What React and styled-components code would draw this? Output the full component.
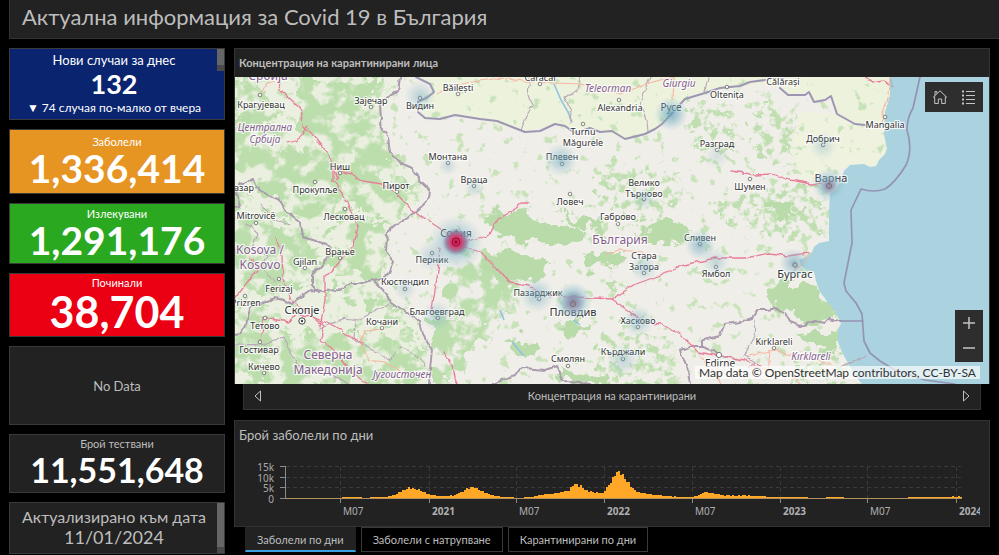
import { useState } from "react";
import styled, { createGlobalStyle } from "styled-components";

const GlobalStyle = createGlobalStyle`
  * {
    box-sizing: border-box;
  }
  body {
    margin: 0;
    background: #000;
    color: #bdbdbd;
    font-family: Lato, "Noto Sans", sans-serif;
  }
  button {
    font: inherit;
    color: inherit;
    margin: 0;
    padding: 0;
    border: 0;
    background: none;
    cursor: pointer;
  }
`;

const Page = styled.div`
  min-height: 100vh;
  display: flex;
  flex-direction: column;
`;

const Header = styled.header`
  margin-left: 9px;
  height: 39px;
  padding: 0 12px;
  background: #222;
  border: solid #333;
  border-width: 0 0 1px 1px;
`;

const Title = styled.h1`
  margin: 0;
  font-size: 22px;
  line-height: 34px;
  font-weight: 400;
`;

const Content = styled.main`
  flex: 1;
  display: grid;
  grid-template-columns: 216px minmax(0, 1fr);
  gap: 9px;
  padding: 9px 9px 1px 9px;
`;

const Sidebar = styled.aside`
  display: grid;
  grid-template-rows: 72fr 65fr 61fr 64fr 79fr 59fr 52fr;
  gap: 9px;
`;

const Card = styled.section`
  display: flex;
  flex-direction: column;
  align-items: center;
  justify-content: center;
  position: relative;
  overflow: hidden;
  min-height: 0;
  padding-right: ${({ $scrolls }) => ($scrolls ? 6 : 0)}px;
  padding-bottom: ${({ $raise }) => $raise || 0}px;
  background: ${({ $bg }) => $bg || "#222"};
  border: 1px solid #3a3a3a;
  color: ${({ $bg }) => ($bg ? "#fff" : "#bdbdbd")};
`;

const CardLabel = styled.div`
  font-size: ${({ $size }) => $size || 12}px;
  line-height: ${({ $line }) => $line || 16}px;
  white-space: nowrap;
`;

const CardValue = styled.div`
  color: #fff;
  font-weight: 700;
  font-size: ${({ $size }) => $size}px;
  line-height: ${({ $line }) => $line || 36}px;
`;

const ScrollThumb = styled.span`
  position: absolute;
  top: 0;
  right: 0;
  width: 7px;
  height: ${({ $height }) => $height}px;
  background: #666;
  border-bottom: 6px solid #4a4a4a;
`;

const Main = styled.div`
  display: flex;
  flex-direction: column;
  min-width: 0;
`;

const MapPanel = styled.section`
  flex: 1;
  display: flex;
  flex-direction: column;
  min-height: 0;
  background: #222;
  border: 1px solid #333;
  border-bottom: 0;
`;

const MapTitle = styled.h2`
  margin: 0;
  padding: 0 4px;
  font-size: 11px;
  line-height: 28px;
  font-weight: 700;
`;

const MapArea = styled.div`
  position: relative;
  flex: 1;
  min-height: 0;
  overflow: hidden;
  background: #aad3df;
`;

const MapSvg = styled.svg`
  position: absolute;
  width: 100%;
  height: 100%;
  display: block;
  font-family: "Noto Sans", sans-serif;
`;

const MapTools = styled.div`
  position: absolute;
  top: 5px;
  right: 6px;
  display: flex;
  background: #2e2e2e;
`;

const ZoomTools = styled.div`
  position: absolute;
  right: 6px;
  bottom: 22px;
  display: flex;
  flex-direction: column;
  background: #2e2e2e;
`;

const ToolButton = styled.button`
  && {
    display: flex;
    align-items: center;
    justify-content: center;
    width: ${({ $width }) => $width}px;
    height: ${({ $height }) => $height}px;
  }
`;

const Attribution = styled.div`
  position: absolute;
  right: 9px;
  bottom: 5px;
  padding: 0 4px;
  background: rgba(255, 255, 255, 0.66);
  color: #333;
  font-size: 12px;
  line-height: 13px;
`;

const Carousel = styled.nav`
  display: flex;
  align-items: center;
  justify-content: space-between;
  margin: 0 9px;
  height: 26px;
  padding: 0 9px 2px;
  background: #222;
  border: 1px solid #333;
  border-top: 0;
  font-size: 11px;
`;

const ChartPanel = styled.section`
  margin-top: 10px;
  background: #222;
  border: 1px solid #333;
`;

const ChartTitle = styled.h2`
  margin: 0;
  padding: 4px 4px 0;
  font-size: 13px;
  line-height: 20px;
  font-weight: 400;
`;

const ChartSvg = styled.svg`
  display: block;
  width: 100%;
  font-family: "Noto Sans", sans-serif;
`;

const Tabs = styled.div`
  display: flex;
  gap: 5px;
  padding-left: 11px;
  margin-bottom: 2px;
`;

const Tab = styled.button`
  && {
    height: 25px;
    padding: 0 11px;
    font-size: 11px;
    background: ${({ $active }) => ($active ? "#222" : "#000")};
    border: 1px solid ${({ $active }) => ($active ? "#222" : "#3a3a3a")};
    border-bottom: ${({ $active }) =>
      $active ? "2px solid #3aa0e0" : "1px solid #3a3a3a"};
  }
`;

const forests = [
  "M300 77L392 77L380 100L381 122L390 150L400 166L424 186L408 215L380 214L340 200L320 180L300 140Z",
  "M234 77L262 77L275 100L290 140L268 165L250 175L234 170Z",
  "M280 150L330 158L350 190L330 222L290 215L262 190L262 168Z",
  "M234 195L300 225L325 245L318 284L296 294L275 296L250 290L234 300Z",
  "M330 215L400 222L386 240L392 262L380 276L336 286L326 262L345 240Z",
  "M234 310L262 308L300 335L300 384L234 384Z",
  "M300 340L350 332L420 332L430 350L424 384L300 384Z",
  "M380 290L395 306L418 322L390 314L350 302L340 296Z",
  "M465 246L500 252L520 270L518 306L490 322L460 320L446 300L450 270Z",
  "M440 318L500 322L482 345L462 372L450 384L436 384L434 345Z",
];

const thinForests = [
  "M604 164L650 165L684 172L684 210L660 220L620 212L602 194Z",
  "M606 330L630 326L676 340L680 356L684 384L606 384L598 366Z",
  "M690 100L735 108L742 150L700 152Z",
  "M758 105L802 118L794 165L765 165L755 140Z",
  "M712 205L766 186L828 190L829 240L800 238L740 226Z",
  "M800 358L850 362L856 384L790 384Z",
  "M612 274L626 276L632 290L614 290Z",
];

const solidForests = [
  "M488 218L500 206L514 212L545 219L580 230L579 242L560 246L520 240L496 236Z",
  "M480 258L500 252L534 254L552 262L548 272L520 280L500 282L486 272Z",
  "M584 256L610 252L626 260L606 268L582 266Z",
  "M632 228L668 222L690 226L684 240L650 244L640 238Z",
  "M556 212L600 222L606 232L580 228Z",
  "M768 200L792 206L804 214L784 216L766 210Z",
  "M766 290L780 284L812 284L828 302L832 318L806 322L790 312L766 300Z",
  "M800 334L836 326L838 344L840 358L820 348Z",
  "M560 372L600 374L610 380L600 384L562 384Z",
  "M508 340L522 338L532 346L534 356L522 354Z",
  "M556 320L578 320L592 330L570 334Z",
  "M242 112L250 118L246 134L240 130Z",
];

const borders = [
  "M400 77L398 92L390 95L380 105L381 118L379 125L388 137L390 152L399 162L412 168L420 180L430 190L429 199L420 208L412 215L395 225L387 232L386 253L394 262L388 275L380 279L373 280L358 284L350 284L340 290L323 291L310 290L300 297L292 305L284 300L275 298L262 303L250 308L246 325L240 334L234 335",
  "M373 280L383 290L392 303L408 313L420 322L423 335L432 350L430 368L429 384",
  "M234 207L240 206L236 194L240 184L253 179L256 188L268 195L280 200L285 210L300 222L302 237L327 244L331 248L325 262L312 275L312 285L318 292",
  "M493 384L515 375L520 368L535 369L545 370L557 366L562 378L570 382L590 384",
  "M690 384L687 365L682 357L680 350L690 347L702 347L702 340L720 336L725 324L740 322L752 318L757 310L768 310L776 308L785 313L790 322L800 326L815 321L825 323L828 319L840 321",
  "M702 347L716 352L727 358",
];

const rivers = [
  "M416 77L430 84L434 92L428 97L418 102L418 112L425 118L440 119L455 115L480 119L497 121L525 132L540 131L555 124L565 126L575 133L590 128L600 132L612 131L625 139L645 134L655 129L662 124L675 110L685 99L705 93L720 88L740 86L750 82L765 80",
  "M780 88L788 95L805 95L809 92L814 102L825 100L831 96L837 114L855 124L865 125",
];

const seaBorder =
  "M920 77L913 108Q907 118 907 130Q913 150 906 165Q896 182 885 189Q874 193 861 189L851 210L852 243L844 283L846 291L856 303L862 314L864 341L870 353L880 361L895 370L925 380L955 384M840 321H863";

const regionLines = [
  "M530 77L528 95L533 105L527 115L521 130",
  "M580 77L578 90L564 97L572 112L570 124",
  "M650 77L644 92L641 105L647 120L648 132",
  "M708 77L705 92M890 77L893 88L888 84",
  "M318 330L345 318L358 320L390 304M355 320L354 340L372 350L390 360L400 346L415 354L425 366",
  "M234 344L262 345L284 336L290 352L298 366L330 372L348 384",
  "M755 320L754 338L744 356L756 362L748 368M840 367L866 356",
  "M247 224L258 234L252 248L268 256L262 268L275 282",
  "M262 205L274 220L290 224",
];

const motorways = [
  "M277 80L283 93L300 107L303 125L313 135L327 152L333 168L337 180L340 170M307 126L301 137L295 141L288 143",
  "M333 168L333 180L344 197L352 214L358 226L354 246L336 266L325 276L325 300L320 327",
  "M337 170L352 174L363 181L382 184L395 192L410 208L430 222L447 233",
  "M462 243L490 234L497 220L515 209L522 203L530 203",
  "M458 245L480 252L498 270L510 283L530 286L550 296L575 297L612 299L636 284L658 276L680 266L715 258L745 258L770 253L788 256L808 253",
  "M612 299L630 312L642 322L660 324L680 334L698 352L720 356L745 360L760 366",
  "M440 248L438 272L434 296L432 310M444 352L452 366L457 384",
  "M276 238L282 256L283 278L290 300L310 314L324 326L320 340L334 350L350 372L368 384",
  "M310 316L334 326L350 336L362 343M264 318L290 322L296 314L310 316M264 318L261 342",
  "M234 300L252 276L258 270L250 258",
  "M732 171L755 175L772 174L790 180L812 184L822 183",
  "M864 77L872 82L884 80L888 84",
];

const trunks = [
  "M277 80L266 84L261 94M360 344L366 330L382 328M360 344L370 360L384 362L410 376",
  "M436 94L460 84L500 78L530 82L580 84L620 94L652 82L675 77M674 77L673 100",
  "M890 77L888 95L883 110L884 130",
  "M808 253L806 262L794 270M748 356L775 350L800 358L830 364M770 350L768 372M700 356L718 374L722 384M750 366L790 374L800 384",
  "M604 254L620 250L642 252L650 256",
];

const streams = [
  "M554 84L561 100L568 112L572 122",
  "M512 342L524 356M574 320L580 325M500 310L504 320M626 350L640 356",
];

// x, y, text, font size
const cities = [
  [261, 108, "Крагујевац"],
  [371, 104, "Зајечар"],
  [420, 109, "Видин"],
  [458, 91, "Băilești"],
  [540, 81, "Caracal"],
  [620, 111, "Alexandria"],
  [671, 111, "Русе", 10],
  [727, 98, "Oltenița"],
  [783, 85, "Călărași"],
  [885, 128, "Mangalia"],
  [583, 135, "Turnu"],
  [583, 146, "Măgurele"],
  [448, 160, "Монтана"],
  [562, 160, "Плевен"],
  [717, 147, "Разград"],
  [823, 142, "Добрич"],
  [474, 183, "Враца"],
  [340, 170, "Ниш"],
  [315, 193, "Прокупље"],
  [396, 189, "Пирот"],
  [344, 220, "Лесковац"],
  [244, 191, "азар"],
  [256, 219, "Mitrovicë"],
  [570, 205, "Ловеч"],
  [644, 186, "Велико"],
  [644, 197, "Търново"],
  [618, 220, "Габрово"],
  [750, 190, "Шумен"],
  [831, 182, "Варна", 11],
  [456, 237, "София", 10],
  [432, 263, "Перник"],
  [340, 255, "Врање"],
  [305, 265, "Gjilan"],
  [279, 292, "Ferizaj"],
  [246, 306, "Prizren"],
  [405, 285, "Кюстендил"],
  [437, 315, "Благоевград"],
  [302, 314, "Скопје", 11],
  [265, 329, "Тетово"],
  [382, 325, "Кочани"],
  [259, 353, "Гостивар"],
  [264, 370, "Кичево"],
  [538, 296, "Пазарджик"],
  [573, 316, "Пловдив", 11],
  [644, 259, "Стара"],
  [644, 270, "Загора"],
  [700, 241, "Сливен"],
  [716, 277, "Ямбол"],
  [638, 324, "Хасково"],
  [568, 362, "Смолян"],
  [623, 355, "Кърджали"],
  [795, 278, "Бургас", 11],
  [774, 345, "Kırklareli"],
  [720, 367, "Edirne", 10],
];

const regions = [
  [265, 131, "Централна", 10, true],
  [265, 143, "Србија", 10, true],
  [608, 92, "Teleorman", 10, true],
  [679, 87, "Giurgiu", 10, true],
  [811, 360, "Kırklareli", 10, true],
  [402, 378, "Југоисточен", 10, true],
  [268, 80, "Србија", 12, false],
  [260, 254, "Kosova /", 12, false],
  [260, 269, "Kosovo", 12, false],
  [328, 359, "Северна", 12, false],
  [328, 374, "Македонија", 12, false],
  [620, 244, "България", 12, false],
];

const dots = [
  [260, 95], [371, 107], [420, 98], [458, 94], [540, 84], [619, 100],
  [727, 87], [885, 117], [583, 124], [448, 163], [562, 164], [717, 150],
  [823, 145], [474, 186], [340, 173], [315, 182], [397, 192], [345, 209],
  [256, 223], [570, 194], [644, 199], [618, 224], [750, 179], [432, 253],
  [340, 258], [305, 268], [279, 279], [245, 296], [405, 289], [438, 318],
  [265, 318], [382, 328], [260, 342], [264, 373], [539, 299], [644, 273],
  [700, 244], [716, 267], [638, 327], [568, 366], [623, 359], [774, 348],
];

const heat = [
  [671, 114, 17, 0.8], [561, 160, 17, 0.55], [420, 96, 16, 0.4],
  [829, 185, 17, 0.8], [823, 146, 14, 0.3], [794, 263, 15, 0.65],
  [573, 301, 19, 0.95], [537, 295, 18, 0.5], [700, 245, 16, 0.6],
  [716, 262, 14, 0.35], [638, 321, 16, 0.45], [644, 268, 14, 0.4],
  [623, 360, 16, 0.35], [437, 316, 16, 0.4], [432, 256, 16, 0.35],
  [456, 243, 28, 0.7], [644, 199, 12, 0.3], [448, 166, 10, 0.3],
  [405, 289, 12, 0.3], [474, 188, 10, 0.3], [717, 156, 13, 0.2],
];

const CovidMap = () => (
  <MapSvg
    viewBox="234 77 756 307"
    preserveAspectRatio="xMidYMid slice"
    role="img"
    aria-label="Концентрация на карантинирани лица"
  >
    <defs>
      <filter id="rough" x="-5%" y="-5%" width="110%" height="110%">
        <feTurbulence type="fractalNoise" baseFrequency="0.07" numOctaves="4" seed="4" />
        <feDisplacementMap in="SourceGraphic" scale="28" xChannelSelector="R" yChannelSelector="G" />
      </filter>
      <filter id="dense" x="-5%" y="-5%" width="110%" height="110%">
        <feTurbulence type="fractalNoise" baseFrequency="0.06" numOctaves="5" seed="11" result="noise" />
        <feColorMatrix
          in="noise"
          values="0 0 0 0 0  0 0 0 0 0  0 0 0 0 0  6 0 0 0 -2.3"
          result="holes"
        />
        <feDisplacementMap in="SourceGraphic" in2="noise" scale="50" xChannelSelector="R" yChannelSelector="G" result="shape" />
        <feComposite in="shape" in2="holes" operator="in" />
      </filter>
      <filter id="thin" x="-5%" y="-5%" width="110%" height="110%">
        <feTurbulence type="fractalNoise" baseFrequency="0.11" numOctaves="4" seed="31" result="noise" />
        <feColorMatrix
          in="noise"
          values="0 0 0 0 0  0 0 0 0 0  0 0 0 0 0  7 0 0 0 -3.4"
          result="holes"
        />
        <feDisplacementMap in="SourceGraphic" in2="noise" scale="40" xChannelSelector="R" yChannelSelector="G" result="shape" />
        <feComposite in="shape" in2="holes" operator="in" />
      </filter>
      <filter id="sparse" x="0" y="0" width="100%" height="100%">
        <feTurbulence type="fractalNoise" baseFrequency="0.09" numOctaves="3" seed="23" />
        <feColorMatrix values="0 0 0 0 0  0 0 0 0 0  0 0 0 0 0  10 0 0 0 -6.5" />
        <feComposite in="SourceGraphic" operator="in" />
      </filter>
      <filter id="wobble" x="-5%" y="-5%" width="110%" height="110%">
        <feTurbulence type="fractalNoise" baseFrequency="0.12" numOctaves="2" seed="7" />
        <feDisplacementMap in="SourceGraphic" scale="5" xChannelSelector="R" yChannelSelector="G" />
      </filter>
      <radialGradient id="heatBlue">
        <stop offset="0" stopColor="#5f9db5" stopOpacity="0.95" />
        <stop offset="0.5" stopColor="#7fb4c6" stopOpacity="0.6" />
        <stop offset="1" stopColor="#9cc8d6" stopOpacity="0" />
      </radialGradient>
      <radialGradient id="heatRed">
        <stop offset="0" stopColor="#dc0a44" />
        <stop offset="0.4" stopColor="#d23a6c" stopOpacity="0.95" />
        <stop offset="0.7" stopColor="#9a6a94" stopOpacity="0.75" />
        <stop offset="1" stopColor="#6aa6c0" stopOpacity="0" />
      </radialGradient>
      <radialGradient id="heatPink">
        <stop offset="0" stopColor="#a8709a" stopOpacity="0.8" />
        <stop offset="1" stopColor="#8c8fb0" stopOpacity="0" />
      </radialGradient>
    </defs>
    <rect x="234" y="77" width="756" height="307" fill="#f0eee8" />
    <path
      d="M234 77H400L381 118L390 152L430 190L387 232L394 262L373 280L420 322L430 384H234Z"
      fill="#eaefdf"
    />
    <path
      d="M416 77L430 84L434 92L418 102L425 118L455 115L480 119L525 132L555 124L575 133L600 131L625 139L655 129L675 110L685 99L740 85L780 84L788 95L809 92L814 102L831 96L837 114L865 125L892 125V77Z"
      fill="#edf2dc"
    />
    <path d="M800 112L837 114L865 125L888 125V160L872 168L840 168L800 182L790 150Z" fill="#eff2df" />
    <rect x="234" y="77" width="656" height="307" fill="#c8e3ba" filter="url(#sparse)" />
    <g fill="#bbdeac" filter="url(#dense)">
      {forests.map((d) => (
        <path key={d} d={d} />
      ))}
    </g>
    <g fill="#bfdfb0" filter="url(#thin)">
      {thinForests.map((d) => (
        <path key={d} d={d} />
      ))}
    </g>
    <g fill="#b9dbaa" filter="url(#rough)">
      {solidForests.map((d) => (
        <path key={d} d={d} />
      ))}
    </g>
    <path
      d="M890 77L890 95L885 112L884 135L887 148L885 154L879 160L876 166L870 167L864 164L850 165L844 171L841 180L836 190L830 194L829 210V241L819 243L814 247L812 252L806 257L799 260L801 265L806 270L814 272L816 281L819 290L826 300L834 310L838 317L841 322L838 330L838 342L843 354L849 365L854 374L862 384H990V77Z"
      fill="#aad3df"
    />
    <path d="M826 319L836 318L841 324L836 332L827 330L824 324Z" fill="#f0eee6" />
    <g fill="none" stroke="#8fc3e0" strokeWidth="1.6">
      {streams.map((d) => (
        <path key={d} d={d} />
      ))}
    </g>
    <g fill="none" strokeLinejoin="round" strokeLinecap="round" filter="url(#wobble)">
      {regionLines.map((d) => (
        <path key={d} d={d} stroke="#b9a6b8" strokeWidth="1.1" />
      ))}
      {borders.map((d) => (
        <path key={d} d={d} stroke="#ab9bae" strokeWidth="2" />
      ))}
      {trunks.map((d) => (
        <path key={d} d={d} stroke="#f6b7a2" strokeWidth="1.1" />
      ))}
      {motorways.map((d) => (
        <path key={d} d={d} stroke="#e87e9a" strokeWidth="1.3" />
      ))}
    </g>
    <g fill="none" strokeLinejoin="round" strokeLinecap="round">
      {rivers.map((d) => (
        <path key={d} d={d} stroke="#9c96b2" strokeWidth="2" />
      ))}
      <path d={seaBorder} stroke="#9593b4" strokeWidth="1.7" />
    </g>
    {dots.map(([x, y]) => (
      <circle key={`${x}-${y}`} cx={x} cy={y} r="1.8" fill="#f4f4f0" stroke="#777" strokeWidth="0.9" />
    ))}
    <g textAnchor="middle" paintOrder="stroke" stroke="#fff" strokeOpacity="0.75" strokeWidth="2.4" strokeLinejoin="round">
      {cities.map(([x, y, name, size = 9]) => (
        <text key={name} x={x} y={y} fontSize={size} fill="#333">
          {name}
        </text>
      ))}
      {regions.map(([x, y, name, size, italic]) => (
        <text key={`${name}-${y}`} x={x} y={y} fontSize={size} fill="#845f8d" fontStyle={italic ? "italic" : "normal"}>
          {name}
        </text>
      ))}
    </g>
    {heat.map(([x, y, r, opacity]) => (
      <circle key={`${x}-${y}`} cx={x} cy={y} r={r} fill="url(#heatBlue)" opacity={opacity} />
    ))}
    <circle cx="573" cy="303" r="12" fill="url(#heatPink)" />
    <circle cx="829" cy="186" r="9" fill="url(#heatPink)" />
    <circle cx="456" cy="242" r="14" fill="url(#heatRed)" />
    <circle cx="456" cy="242" r="4" fill="none" stroke="#8d1238" />
    <circle cx="456" cy="242" r="1.5" fill="#8d1238" />
    <circle cx="302" cy="321" r="3.2" fill="#fff" stroke="#444" />
    <circle cx="302" cy="321" r="1.2" fill="#444" />
    <g fill="none" stroke="#777">
      <circle cx="573" cy="304" r="2.6" />
      <circle cx="829" cy="186" r="2.6" />
      <circle cx="795" cy="265" r="2.2" />
      <circle cx="719" cy="355" r="2.6" fill="#fff" />
    </g>
  </MapSvg>
);

const HomeIcon = () => (
  <svg width="16" height="16" viewBox="0 0 16 16" fill="none" stroke="#c4c4c4">
    <path d="M1 8.5L8 1.8L15 8.5M3 2.5V6.5M3 2.5H4.8V4.5M2.7 7.5V14.5H6.3V10H9.7V14.5H13.3V7.5" />
  </svg>
);

const LegendIcon = () => (
  <svg width="16" height="16" viewBox="0 0 16 16" stroke="#c4c4c4">
    <path d="M1 2.5H3M1 6.5H3M1 10.5H3M1 14.5H3" strokeWidth="2" />
    <path d="M5 2.5H14M5 6.5H14M5 10.5H14M5 14.5H14" />
  </svg>
);

// plot x, daily cases in thousands
const trend = [
  [52, 0], [107, 0.1], [109, 0.6], [126, 0.6], [128, 0.1], [146, 0.4],
  [157, 0.9], [165, 2.8], [174, 4.9], [184, 3.8], [191, 2.4], [197, 1.4],
  [206, 0.9], [218, 1.2], [227, 3], [234, 4.8], [240, 5.2], [246, 3.4],
  [256, 1.5], [269, 0.4], [286, 0.1], [296, 0.5], [311, 1.9], [321, 2.2],
  [334, 3.4], [339, 6.8], [346, 5.6], [352, 3.4], [368, 2.1], [371, 4.5],
  [375, 6.8], [380, 11], [383, 12.8], [387, 11.5], [392, 8], [398, 4.8],
  [403, 2.6], [416, 1.7], [431, 0.9], [456, 0.4], [463, 1], [470, 3],
  [481, 1.9], [491, 1.2], [514, 1.2], [523, 0.9], [541, 0.5], [566, 0.3],
  [588, 0.1], [592, 0.4], [607, 0.4], [610, 0.1], [672, 0.1], [676, 0.6],
  [700, 0.6], [728, 0.7],
];

const step = 2;
const scale = 2.1;

const casesAt = (x) => {
  const i = trend.findIndex(([px]) => px >= x);
  if (i <= 0) return trend[0][1];
  const [x0, y0] = trend[i - 1];
  const [x1, y1] = trend[i];
  return y0 + ((y1 - y0) * (x - x0)) / (x1 - x0);
};

const bars = Array.from({ length: 338 }, (_, i) => {
  const x = 52 + i * step;
  return { x, height: casesAt(x) * scale * (1 + 0.08 * Math.sin(i * 2.4)) };
});

const ticks = [
  [106, "M07"], [195, "2021"], [282, "M07"], [370, "2022"],
  [458, "M07"], [546, "2023"], [633, "M07"], [722, "2024"],
];

const levels = [[15, "15k"], [10, "10k"], [5, "5k"], [0, "0"]];

const CasesChart = () => (
  <ChartSvg viewBox="1 0 754 81" role="img" aria-label="Брой заболели по дни">
    <defs>
      <clipPath id="plot">
        <rect width="746" height="81" />
      </clipPath>
    </defs>
    {levels.map(([value, label]) => {
      const y = 53.5 - Math.round(value * scale);
      return (
        <g key={label}>
          {value > 0 && <path d={`M52 ${y}H727`} stroke="#3a3a3a" strokeDasharray="4 3" />}
          <path d={`M46 ${y}H52`} stroke="#8a8a8a" />
          <text x="40" y={y + 4} fontSize="10" fill="#a9a9a9" textAnchor="end">
            {label}
          </text>
        </g>
      );
    })}
    <path d="M51.5 21V54" stroke="#8a8a8a" />
    <g clipPath="url(#plot)">
      {ticks.map(([x, label]) => (
        <g key={x}>
          <path d={`M${x + 0.5} 22V53`} stroke="#3a3a3a" strokeDasharray="4 3" />
          <path d={`M${x + 0.5} 54V58`} stroke="#8a8a8a" />
          <text x={x + 3} y="70" fontSize="10" fill="#b0b0b0" fontWeight={label === "M07" ? 400 : 700}>
            {label}
          </text>
        </g>
      ))}
    </g>
    <g fill="#ffa726">
      {bars.map(({ x, height }) => (
        <rect key={x} x={x} y={53 - Math.round(height)} width={step} height={Math.round(height)} />
      ))}
    </g>
    <path d="M52 53.5H728" stroke="#b3915a" />
  </ChartSvg>
);

const chartTabs = ["Заболели по дни", "Заболели с натрупване", "Карантинирани по дни"];

const App = () => {
  const [activeTab, setActiveTab] = useState(0);

  return (
    <Page>
      <GlobalStyle />
      <Header>
        <Title>Актуална информация за Covid 19 в България</Title>
      </Header>
      <Content>
        <Sidebar>
          <Card $bg="#0a246f" $scrolls>
            <CardLabel $size={13} $line={20}>Нови случаи за днес</CardLabel>
            <CardValue $size={27} $line={28}>132</CardValue>
            <CardLabel $line={20}>▼ 74 случая по-малко от вчера</CardLabel>
            <ScrollThumb $height={22} />
          </Card>
          <Card $bg="#e69422" $raise={4}>
            <CardLabel $size={11}>Заболели</CardLabel>
            <CardValue $size={39}>1,336,414</CardValue>
          </Card>
          <Card $bg="#2aa820" $raise={4}>
            <CardLabel $size={11}>Излекувани</CardLabel>
            <CardValue $size={39}>1,291,176</CardValue>
          </Card>
          <Card $bg="#ea0012" $raise={2}>
            <CardLabel $size={11}>Починали</CardLabel>
            <CardValue $size={43} $line={42}>38,704</CardValue>
          </Card>
          <Card>
            <CardLabel $size={13}>No Data</CardLabel>
          </Card>
          <Card $raise={4}>
            <CardLabel $size={11}>Брой тествани</CardLabel>
            <CardValue $size={34}>11,551,648</CardValue>
          </Card>
          <Card $scrolls $raise={2}>
            <CardLabel $size={16} $line={20}>Актуализирано към дата</CardLabel>
            <CardLabel $size={18} $line={20}>11/01/2024</CardLabel>
            <ScrollThumb $height={50} />
          </Card>
        </Sidebar>
        <Main>
          <MapPanel>
            <MapTitle>Концентрация на карантинирани лица</MapTitle>
            <MapArea>
              <CovidMap />
              <MapTools>
                <ToolButton $width={29} $height={30} aria-label="Начало">
                  <HomeIcon />
                </ToolButton>
                <ToolButton $width={29} $height={30} aria-label="Легенда">
                  <LegendIcon />
                </ToolButton>
              </MapTools>
              <Attribution>Map data © OpenStreetMap contributors, CC-BY-SA</Attribution>
              <ZoomTools>
                <ToolButton $width={28} $height={26} aria-label="Увеличаване">
                  <svg width="12" height="12" stroke="#c4c4c4">
                    <path d="M0 6H12M6 0V12" strokeWidth="1.5" />
                  </svg>
                </ToolButton>
                <ToolButton $width={28} $height={26} aria-label="Намаляване">
                  <svg width="12" height="12" stroke="#c4c4c4">
                    <path d="M0 5H12" strokeWidth="1.5" />
                  </svg>
                </ToolButton>
              </ZoomTools>
            </MapArea>
          </MapPanel>
          <Carousel>
            <ToolButton $width={10} $height={20} aria-label="Предишна">
              <svg width="8" height="12" fill="none" stroke="#c4c4c4">
                <path d="M6.5 1V11L1 6Z" />
              </svg>
            </ToolButton>
            <span>Концентрация на карантинирани</span>
            <ToolButton $width={10} $height={20} aria-label="Следваща">
              <svg width="8" height="12" fill="none" stroke="#c4c4c4">
                <path d="M1.5 1V11L7 6Z" />
              </svg>
            </ToolButton>
          </Carousel>
          <ChartPanel>
            <ChartTitle>Брой заболели по дни</ChartTitle>
            <CasesChart />
          </ChartPanel>
          <Tabs role="tablist">
            {chartTabs.map((name, i) => (
              <Tab
                key={name}
                role="tab"
                aria-selected={i === activeTab}
                $active={i === activeTab}
                onClick={() => setActiveTab(i)}
              >
                {name}
              </Tab>
            ))}
          </Tabs>
        </Main>
      </Content>
    </Page>
  );
};

export default App;
